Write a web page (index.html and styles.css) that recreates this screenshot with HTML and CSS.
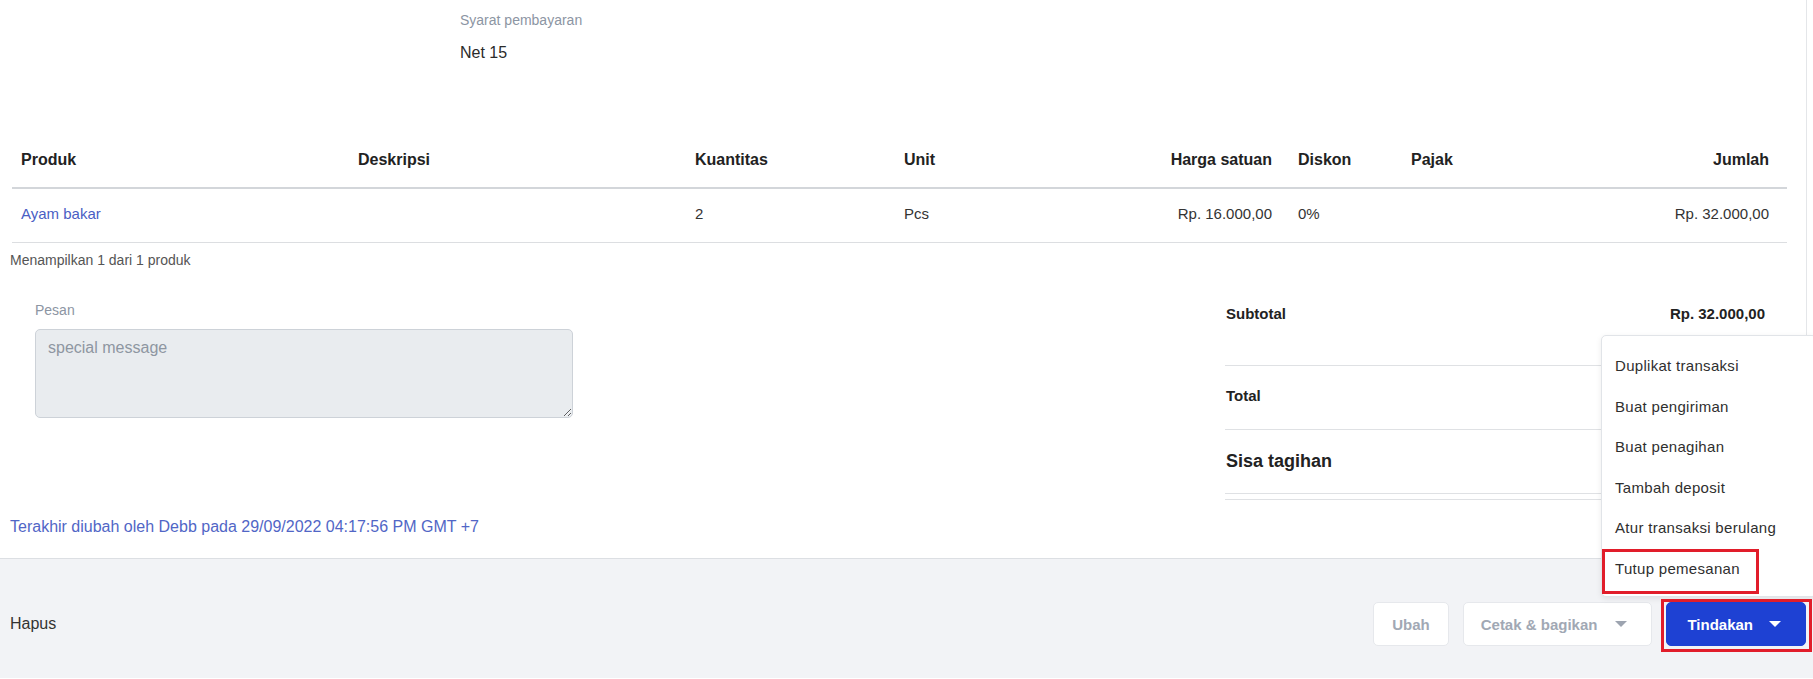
FILE: index.html
```html
<!DOCTYPE html>
<html lang="id">
<head>
    <meta charset="UTF-8">
    <meta name="viewport" content="width=device-width, initial-scale=1.0">
    <title>Pesanan Penjualan</title>
    <link rel="stylesheet" href="styles.css">
</head>
<body>

<div class="page">
    <div class="payment-term">
        <div class="field-label">Syarat pembayaran</div>
        <div class="field-value">Net 15</div>
    </div>

    <table class="product-table">
        <colgroup>
            <col style="width:337px">
            <col style="width:337px">
            <col style="width:209px">
            <col style="width:200px">
            <col style="width:194px">
            <col style="width:113px">
            <col style="width:198px">
            <col style="width:187px">
        </colgroup>
        <thead>
            <tr>
                <th>Produk</th>
                <th>Deskripsi</th>
                <th>Kuantitas</th>
                <th>Unit</th>
                <th class="col-price">Harga satuan</th>
                <th>Diskon</th>
                <th>Pajak</th>
                <th class="col-amount">Jumlah</th>
            </tr>
        </thead>
        <tbody>
            <tr>
                <td><a href="#" class="product-link">Ayam bakar</a></td>
                <td></td>
                <td>2</td>
                <td>Pcs</td>
                <td class="col-price">Rp. 16.000,00</td>
                <td>0%</td>
                <td></td>
                <td class="col-amount">Rp. 32.000,00</td>
            </tr>
        </tbody>
    </table>

    <div class="table-count">Menampilkan 1 dari 1 produk</div>

    <div class="bottom-area">
        <div class="message-box">
            <label class="message-label" for="message">Pesan</label>
            <textarea id="message" class="message-input" placeholder="special message" readonly></textarea>
        </div>

        <div class="summary">
            <div class="summary-row first">
                <span>Subtotal</span>
                <span>Rp. 32.000,00</span>
            </div>
            <!-- values of these rows sit under the open menu -->
            <div class="summary-row">
                <span>Total</span>
                <span></span>
            </div>
            <div class="summary-row big">
                <span>Sisa tagihan</span>
                <span></span>
            </div>
            <div class="summary-end"></div>
        </div>
    </div>

    <div class="updated-info">Terakhir diubah oleh Debb pada 29/09/2022 04:17:56 PM GMT +7</div>
</div>

<div class="footer-bar">
    <a href="#" class="delete-link">Hapus</a>
    <div class="footer-actions">
        <button class="btn btn-light">Ubah</button>
        <button class="btn btn-light">Cetak &amp; bagikan <span class="caret"></span></button>
        <button class="btn btn-primary">Tindakan <span class="caret"></span></button>
    </div>
</div>

<div class="action-menu">
    <div class="menu-item">Duplikat transaksi</div>
    <div class="menu-item">Buat pengiriman</div>
    <div class="menu-item">Buat penagihan</div>
    <div class="menu-item">Tambah deposit</div>
    <div class="menu-item">Atur transaksi berulang</div>
    <div class="menu-item">Tutup pemesanan</div>
</div>

<!-- highlight boxes from the annotated screenshot -->
<div class="highlight highlight-menu"></div>
<div class="highlight highlight-button"></div>

</body>
</html>
```

FILE: styles.css
```css
html, body {
    margin: 0;
    overflow: hidden;
}
body {
    font-family: "Liberation Sans", Arial, sans-serif;
    color: #333;
    background: #fff;
    position: relative;
    width: 1813px;
    height: 679px;
}
.page {
    width: 1806px;
    border-right: 1px solid #e4e6e9;
    padding-bottom: 21px;
}

/* payment term */
.payment-term {
    padding: 12px 0 0 460px;
}
.field-label {
    font-size: 14px;
    line-height: 16px;
    color: #8c95a3;
}
.field-value {
    margin-top: 15px;
    font-size: 16px;
    line-height: 20px;
    color: #2b2b2b;
}

/* product table */
.product-table {
    margin: 73px 19px 0 12px;
    width: 1775px;
    border-collapse: collapse;
    table-layout: fixed;
    font-size: 15px;
}
.product-table th {
    text-align: left;
    font-weight: bold;
    font-size: 16px;
    color: #222;
    line-height: 20px;
    padding: 14px 9px 17px;
    border-bottom: 2px solid #d3d6da;
}
.product-table td {
    line-height: 20px;
    padding: 15px 9px 18px;
    color: #333;
    border-bottom: 1px solid #dcdee1;
}
.product-table .col-price {
    text-align: right;
    padding-right: 17px;
}
.product-table .col-amount {
    text-align: right;
    padding-right: 18px;
}
.product-link {
    color: #4a5ec4;
    text-decoration: none;
}
.table-count {
    margin-top: 9px;
    padding-left: 10px;
    font-size: 14px;
    line-height: 16px;
    color: #555;
}

/* message + summary */
.bottom-area {
    display: flex;
    align-items: flex-start;
}
.message-box {
    padding: 34px 0 0 35px;
    display: flex;
    flex-direction: column;
}
.message-label {
    font-size: 14px;
    line-height: 16px;
    color: #8c95a3;
}
.message-input {
    margin-top: 11px;
    width: 538px;
    height: 89px;
    box-sizing: border-box;
    background: #e9ecef;
    border: 1px solid #cdd2d8;
    border-radius: 5px;
    padding: 8px 12px;
    font-family: "Liberation Sans", Arial, sans-serif;
    font-size: 16px;
    line-height: 20px;
    resize: both;
    outline: none;
}
.message-input::placeholder {
    color: #8e96a1;
}
.summary {
    margin-left: auto;
    margin-right: 19px;
    width: 562px;
}
.summary-row {
    display: flex;
    justify-content: space-between;
    font-size: 15px;
    font-weight: bold;
    line-height: 20px;
    color: #222;
    padding: 20px 22px 23px 1px;
    border-bottom: 1px solid #dfe1e4;
}
.summary-row.first {
    padding-top: 36px;
    padding-bottom: 41px;
}
.summary-row.big {
    font-size: 18px;
    line-height: 22px;
    padding-top: 20px;
    padding-bottom: 21px;
}
.summary-end {
    margin-top: 5px;
    border-top: 1px solid #dfe1e4;
}
.updated-info {
    margin-top: 17px;
    padding-left: 10px;
    font-size: 16px;
    line-height: 20px;
    color: #5166c6;
}

/* footer */
.footer-bar {
    border-top: 1px solid #dcdfe3;
    background: #f2f3f6;
    height: 120px;
    box-sizing: border-box;
    padding: 43px 7px 0 10px;
    display: flex;
    align-items: flex-start;
    justify-content: space-between;
}
.delete-link {
    line-height: 44px;
    font-size: 16px;
    color: #333;
    text-decoration: none;
}
.footer-actions {
    display: flex;
    gap: 14px;
}
.btn {
    height: 44px;
    border-radius: 5px;
    font-family: "Liberation Sans", Arial, sans-serif;
    font-size: 15px;
    font-weight: bold;
    cursor: pointer;
    display: flex;
    align-items: center;
}
.btn-light {
    background: #fff;
    border: 1px solid #e6e8ec;
    color: #a1a8b4;
    padding: 0 18px;
}
.btn-light .caret {
    margin-left: 18px;
    border-top-color: #9da4b0;
}
.btn-light:nth-child(2) {
    padding: 0 24px 0 17px;
}
.btn-primary {
    background: #1e41d3;
    border: 1px solid #1e41d3;
    color: #fff;
    padding: 0 24px 0 20px;
}
.btn-primary .caret {
    margin-left: 16px;
    border-top-color: #fff;
}
.caret {
    display: inline-block;
    width: 0;
    height: 0;
    border-left: 6px solid transparent;
    border-right: 6px solid transparent;
    border-top: 6px solid;
}

/* dropdown */
.action-menu {
    position: absolute;
    left: 1601px;
    top: 335px;
    width: 216px;
    height: 262px;
    box-sizing: border-box;
    background: #fff;
    border: 1px solid #e1e4e8;
    border-radius: 5px;
    box-shadow: 0 2px 6px rgba(0, 0, 0, 0.08);
    padding-top: 10px;
}
.menu-item {
    padding: 10px 13px;
    line-height: 20.6px;
    font-size: 15px;
    letter-spacing: 0.3px;
    color: #2f2f2f;
    white-space: nowrap;
}

.highlight {
    position: absolute;
    border: 3px solid #e11d2a;
    box-sizing: border-box;
}
.highlight-menu {
    left: 1602px;
    top: 549px;
    width: 157px;
    height: 45px;
}
.highlight-button {
    left: 1661px;
    top: 599px;
    width: 151px;
    height: 53px;
}
```
